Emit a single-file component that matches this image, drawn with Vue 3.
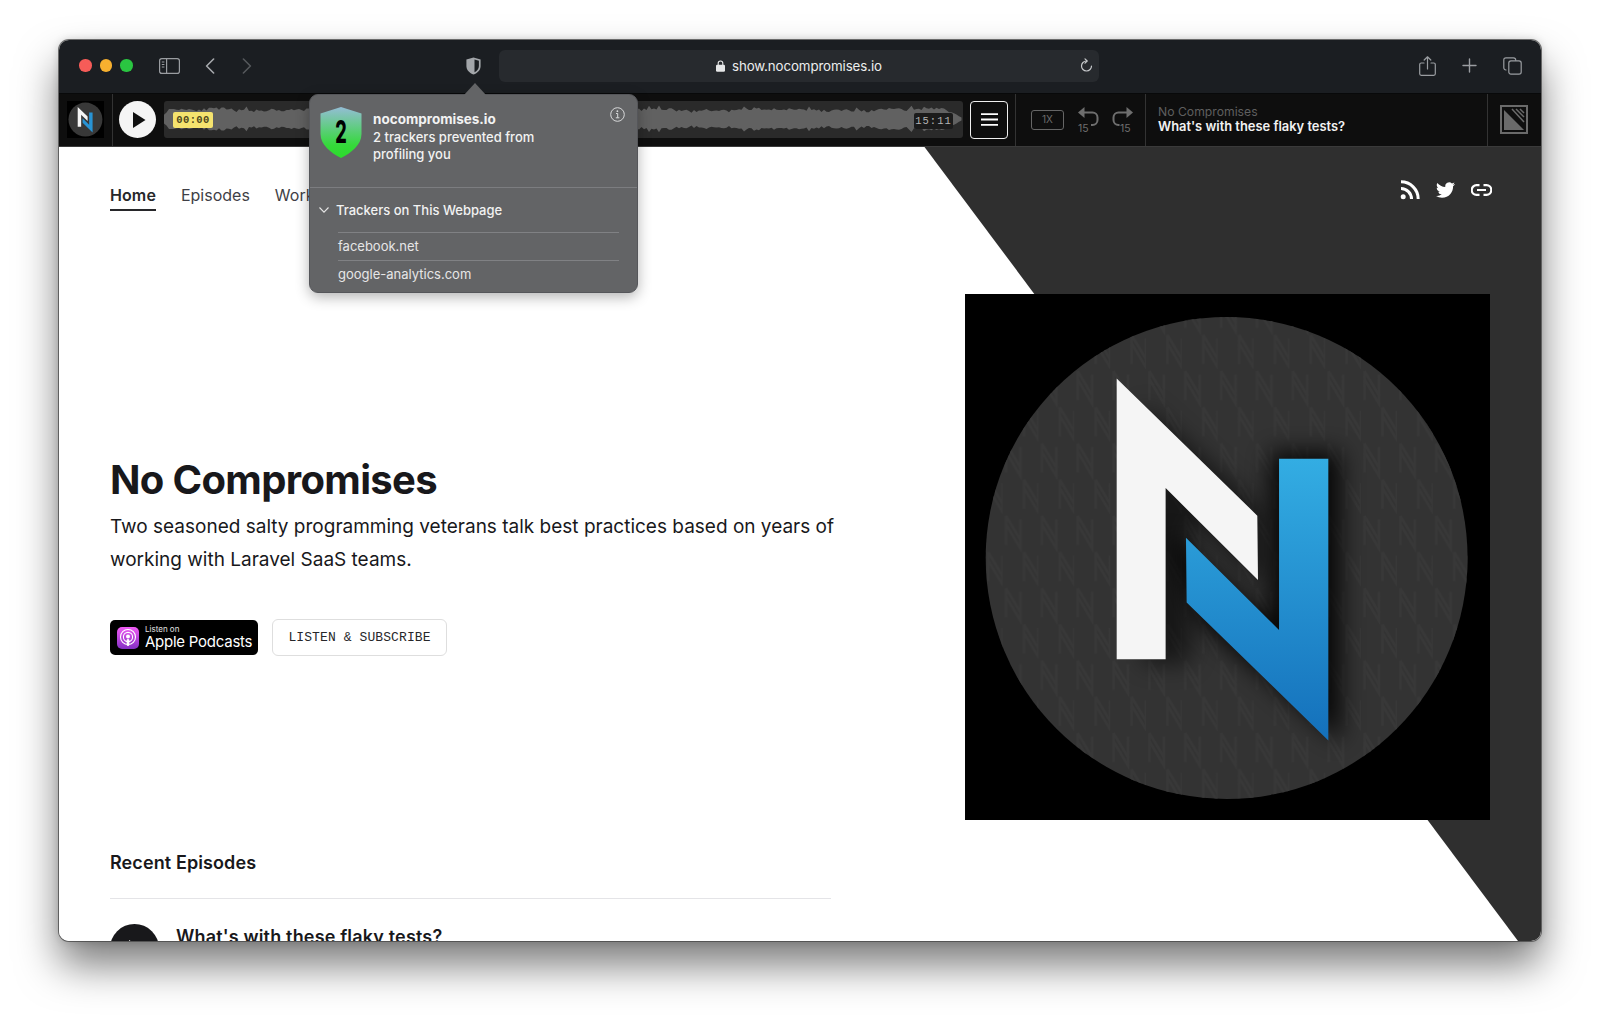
<script setup>
function wavePath(width, mid) {
  const top = []
  const bottom = []
  let seed = 11
  const rnd = () => {
    seed = (seed * 16807) % 2147483647
    return seed / 2147483647
  }
  for (let x = 0; x <= width; x += 2.5) {
    const slow = 0.5 + 0.3 * Math.sin(x / 23) + 0.2 * Math.sin(x / 7.1)
    let amp = 7.5 + 3 * slow + (rnd() - 0.5) * 3
    if (rnd() > 0.93) amp += 3
    amp = Math.max(5.5, Math.min(14, amp))
    const fade = Math.min(1, (x + 8) / 14, (width - x + 2) / 18)
    top.push(`${x},${(mid - amp * fade).toFixed(1)}`)
    bottom.unshift(`${x},${(mid + (amp * 0.95 + 0.5) * fade).toFixed(1)}`)
  }
  return 'M' + top.concat(bottom).join('L') + 'Z'
}
const wave = wavePath(799, 18)

const trackers = ['facebook.net', 'google-analytics.com']
const nav = [
  { label: 'Home', active: true },
  { label: 'Episodes', active: false },
  { label: 'Work with us', active: false }
]
</script>

<template>
  <div class="page">
    <div class="window">
      <header class="titlebar">
        <span class="light red"></span>
        <span class="light yellow"></span>
        <span class="light green"></span>
        <svg class="ic sidebar" width="21" height="16" viewBox="0 0 21 16" fill="none" stroke="#9a9da1" stroke-width="1.2">
          <rect x=".6" y=".6" width="19.8" height="14.8" rx="2.2" />
          <path d="M7.6 .6v14.8" />
          <path d="M2.8 4h2.6M2.8 6.5h2.6M2.8 9h2.6" stroke-width="1" />
        </svg>
        <svg class="ic back" width="10" height="16" viewBox="0 0 10 16" fill="none" stroke="#a6a9ad" stroke-width="1.6" stroke-linecap="round" stroke-linejoin="round">
          <path d="M8.6 1 1.6 8l7 7" />
        </svg>
        <svg class="ic forward" width="10" height="16" viewBox="0 0 10 16" fill="none" stroke="#55585c" stroke-width="1.6" stroke-linecap="round" stroke-linejoin="round">
          <path d="M1.4 1l7 7-7 7" />
        </svg>
        <svg class="ic shield" width="15" height="18" viewBox="0 0 15 18">
          <path d="M7.5 .4 14.6 2.6V9c0 4.2-3.2 7-7.1 8.600C3.600 16 .4 13.200 .4 9V2.600Z" fill="#a3a6aa" />
          <path d="M8.500 2.500 12.900 3.800V9c0 3-2 5-4.400 6.300Z" fill="#1b1e22" />
        </svg>
        <div class="urlbar">
          <svg class="lock" width="9" height="12" viewBox="0 0 9 12">
            <path d="M2.200 5V3.300a2.300 2.300 0 0 1 4.600 0V5" fill="none" stroke="#e6e7e8" stroke-width="1.100" />
            <rect y="4.800" width="9" height="7" rx="1.300" fill="#e6e7e8" />
          </svg>
          <span class="url">show.nocompromises.io</span>
          <svg class="reload" width="13" height="15" viewBox="0 0 13 15" fill="none" stroke="#c8cacc" stroke-width="1.200" stroke-linecap="round" stroke-linejoin="round">
            <path d="M6.500 3a5 5 0 1 0 5 5" />
            <path d="M5 .8 7.200 3 5 5.200" />
          </svg>
        </div>
        <svg class="ic share" width="17" height="20" viewBox="0 0 17 20" fill="none" stroke="#9a9da1" stroke-width="1.200" stroke-linecap="round" stroke-linejoin="round">
          <path d="M5 7H2.200a1.500 1.500 0 0 0-1.500 1.500v9.300a1.500 1.500 0 0 0 1.500 1.500h12.600a1.500 1.500 0 0 0 1.500-1.500V8.500A1.500 1.500 0 0 0 14.800 7H12" />
          <path d="M8.500 13V1M5.200 4 8.500 .8 11.800 4" />
        </svg>
        <svg class="ic plus" width="15" height="15" viewBox="0 0 15 15" stroke="#9a9da1" stroke-width="1.400" stroke-linecap="round">
          <path d="M7.500 1v13M1 7.500h13" />
        </svg>
        <svg class="ic tabs" width="19" height="18" viewBox="0 0 19 18" fill="none" stroke="#9a9da1" stroke-width="1.200">
          <path d="M3.500 13H3a2.200 2.200 0 0 1-2.200-2.200V3A2.200 2.200 0 0 1 3 .8h7.500A2.200 2.200 0 0 1 12.700 3v.8" />
          <rect x="5.800" y="3.800" width="12.400" height="13.400" rx="2.200" />
        </svg>
      </header>

      <div class="player">
        <svg class="mini-logo" width="37" height="37" viewBox="15 12 1523 1526">
          <rect x="15" y="12" width="1523" height="1526" fill="#000" />
          <circle cx="774" cy="778" r="700" fill="#383838" />
          <path d="M455 257 863 655 865 842 597 575V1072H455Z" fill="#f5f5f5" />
          <path d="M926 490H1069V1307L658 907 656 719 926 987Z" fill="#2893d4" />
        </svg>
        <span class="vsep first"></span>
        <span class="play">
          <svg width="14" height="16" viewBox="0 0 14 16"><path d="M1 0 13.500 8 1 16Z" fill="#111" /></svg>
        </span>
        <div class="wavebox">
          <svg class="wave" width="799" height="37" viewBox="0 0 799 37"><path :d="wave" fill="#616161" /></svg>
          <span class="time-start">00:00</span>
          <span class="time-end">15:11</span>
        </div>
        <button class="menu">
          <svg width="17" height="13" viewBox="0 0 17 13" stroke="#fff" stroke-width="1.800"><path d="M0 1.200h17M0 6.500h17M0 11.800h17" /></svg>
        </button>
        <span class="vsep second"></span>
        <span class="speed">1X</span>
        <svg class="skip skip-back" width="22" height="26" viewBox="0 0 22 26" fill="none" stroke="#6e6e6e" stroke-width="2">
          <path d="M0 5.500 6.500 0V11Z" fill="#6e6e6e" stroke="none" />
          <path d="M5 5.500h9.500A5 5 0 0 1 19.500 10.500v2.500a5 5 0 0 1-5 5H13" />
          <text x="0" y="24.500" class="skip-num">15</text>
        </svg>
        <svg class="skip skip-fwd" width="22" height="26" viewBox="0 0 22 26" fill="none" stroke="#6e6e6e" stroke-width="2">
          <path d="M21 5.500 14.500 0V11Z" fill="#6e6e6e" stroke="none" />
          <path d="M16 5.500H6.500A5 5 0 0 0 1.500 10.500v2.500a5 5 0 0 0 5 5h1" />
          <text x="8" y="24.500" class="skip-num">15</text>
        </svg>
        <span class="vsep third"></span>
        <div class="now">
          <span class="now-show">No Compromises</span>
          <span class="now-title">What's with these flaky tests?</span>
        </div>
        <span class="vsep last"></span>
        <svg class="cover-ic" width="28" height="29" viewBox="0 0 28 29">
          <rect x="1" y="1" width="26" height="27" fill="none" stroke="#6a6a6a" stroke-width="2" />
          <path d="M4 5 24 25H4Z" fill="#6a6a6a" />
          <path d="M12 4 24 17M16 4 24 12M20 4 24 8" stroke="#6a6a6a" stroke-width="1.500" />
        </svg>
      </div>

      <main class="content">
        <div class="slant"></div>
        <div class="topline">
          <nav class="nav">
            <a v-for="item in nav" :key="item.label" class="nav-link" :class="{ active: item.active }">{{ item.label }}</a>
          </nav>
          <div class="social">
            <svg width="20" height="20" viewBox="0 0 20 20" fill="none" stroke="#fff" stroke-width="3">
              <path d="M1 8.500A10.500 10.500 0 0 1 11.500 19" />
              <path d="M1 1.800A17.200 17.200 0 0 1 18.200 19" />
              <circle cx="3.200" cy="16.800" r="2.500" fill="#fff" stroke="none" />
            </svg>
            <svg width="19" height="16" viewBox="0 0 24 20">
              <path fill="#fff" d="M23.950 2.570a10 10 0 0 1-2.820.77 4.960 4.960 0 0 0 2.160-2.720c-.95.55-2 .96-3.130 1.190a4.920 4.920 0 0 0-8.380 4.480C7.690 6.100 4.070 4.130 1.640 1.160a4.820 4.820 0 0 0-.67 2.480c0 1.710.87 3.210 2.190 4.100a4.900 4.900 0 0 1-2.230-.62v.06a4.920 4.920 0 0 0 3.950 4.830 5 5 0 0 1-2.210.08 4.940 4.940 0 0 0 4.600 3.420A9.870 9.870 0 0 1 0 17.540 14 14 0 0 0 7.550 19.750c9.050 0 14-7.500 14-13.980 0-.21 0-.42-.02-.63a9.940 9.940 0 0 0 2.460-2.550Z" />
            </svg>
            <svg width="21" height="12" viewBox="0 0 21 12" fill="none" stroke="#fff" stroke-width="2.200">
              <path d="M8.500 1.200H5.500a4.800 4.800 0 0 0 0 9.600h3M12.500 1.200h3a4.800 4.800 0 0 1 0 9.600h-3M6 6h9" />
            </svg>
          </div>
        </div>

        <section class="hero">
          <div class="intro">
            <h1>No Compromises</h1>
            <p>Two seasoned salty programming veterans talk best practices based on years of working with Laravel SaaS teams.</p>
            <div class="actions">
              <a class="apple">
                <svg width="22" height="22" viewBox="0 0 22 22">
                  <defs>
                    <linearGradient id="podcast" x1="0" y1="0" x2="0" y2="1">
                      <stop offset="0" stop-color="#f15bf5" />
                      <stop offset="1" stop-color="#8430c4" />
                    </linearGradient>
                  </defs>
                  <rect width="22" height="22" rx="5" fill="url(#podcast)" />
                  <circle cx="11" cy="10" r="7.500" fill="none" stroke="#fff" stroke-width="1.100" />
                  <circle cx="11" cy="10" r="4.600" fill="none" stroke="#fff" stroke-width="1.100" />
                  <circle cx="11" cy="9.500" r="2" fill="#fff" />
                  <rect x="9.700" y="12" width="2.600" height="7" rx="1.300" fill="#fff" />
                </svg>
                <span class="apple-text">
                  <small>Listen on</small>
                  <strong>Apple Podcasts</strong>
                </span>
              </a>
              <a class="subscribe">LISTEN &amp; SUBSCRIBE</a>
            </div>
          </div>
          <svg class="artwork" width="525" height="526" viewBox="15 12 1523 1526">
            <defs>
              <linearGradient id="blue" x1="0" y1="0" x2="0" y2="1">
                <stop offset="0" stop-color="#33ade3" />
                <stop offset="1" stop-color="#1470bb" />
              </linearGradient>
              <filter id="soft" x="-30%" y="-30%" width="160%" height="160%">
                <feGaussianBlur stdDeviation="34" />
              </filter>
              <pattern id="marks" width="104" height="210" patternUnits="userSpaceOnUse" x="20" y="20">
                <g fill="none" stroke="#383838" stroke-width="7">
                  <path d="M10 6v84M10 6 52 76M52 16v84L10 30" />
                  <path d="M62 111v84M62 111l42 70M104 121v84L62 135" />
                </g>
              </pattern>
              <clipPath id="disc"><circle cx="774" cy="778" r="699" /></clipPath>
            </defs>
            <rect x="15" y="12" width="1523" height="1526" fill="#000" />
            <circle cx="774" cy="778" r="699" fill="#333" />
            <circle cx="774" cy="778" r="699" fill="url(#marks)" />
            <g clip-path="url(#disc)">
              <path d="M530 330 880 640V860L670 660V1085H530Z" fill="#000" opacity=".55" filter="url(#soft)" />
              <path d="M900 470H1105V1310L690 960 600 700 900 960Z" fill="#000" opacity=".85" filter="url(#soft)" />
            </g>
            <path d="M455 257 863 655 865 842 597 575V1072H455Z" fill="#f5f5f5" />
            <path d="M926 490H1069V1307L658 907 656 719 926 987Z" fill="url(#blue)" />
          </svg>
        </section>

        <section class="recent">
          <h2>Recent Episodes</h2>
          <div class="episode">
            <span class="ep-play">
              <svg width="16" height="18" viewBox="0 0 16 18"><path d="M1 0 15 9 1 18Z" fill="#fff" /></svg>
            </span>
            <h3>What's with these flaky tests?</h3>
          </div>
        </section>
      </main>

      <aside class="popover">
        <span class="arrow"></span>
        <div class="pop-head">
          <svg class="badge" width="42" height="51" viewBox="0 0 42 51">
            <defs>
              <linearGradient id="guard" x1="0" y1="0" x2="0" y2="1">
                <stop offset="0" stop-color="#94bdd6" />
                <stop offset=".75" stop-color="#35d93a" />
                <stop offset="1" stop-color="#2bdc2b" />
              </linearGradient>
            </defs>
            <path d="M21 0 41.500 6.500V27C41.500 38 31 46 21 51 11 46 .5 38 .5 27V6.500Z" fill="url(#guard)" />
            <text class="badge-num" text-anchor="middle" transform="translate(21 36) scale(.58 1)">2</text>
          </svg>
          <div class="pop-text">
            <strong>nocompromises.io</strong>
            <span>2 trackers prevented from profiling you</span>
          </div>
          <svg class="info" width="15" height="15" viewBox="0 0 15 15" fill="none" stroke="#d8d9da" stroke-width="1">
            <circle cx="7.500" cy="7.500" r="6.800" />
            <path d="M6 6.500h1.700v4.300M5.800 10.800h3.600" />
            <circle cx="7.400" cy="4.200" r=".9" fill="#d8d9da" stroke="none" />
          </svg>
        </div>
        <div class="pop-list">
          <div class="pop-listhead">
            <svg width="10" height="6" viewBox="0 0 10 6" fill="none" stroke="#e6e6e6" stroke-width="1.100"><path d="M.5 .5 5 5.200 9.500 .5" /></svg>
            <span>Trackers on This Webpage</span>
          </div>
          <div v-for="t in trackers" :key="t" class="pop-item">{{ t }}</div>
        </div>
      </aside>
    </div>
  </div>
</template>

<style scoped>
.page {
  width: 1600px;
  height: 1018px;
  box-sizing: border-box;
  padding: 40px 59px 77px 59px;
  background: #fff;
  overflow: hidden;
  font-family: Inter, "Liberation Sans", sans-serif;
}
.window {
  position: relative;
  height: 901px;
  border-radius: 10px;
  display: flex;
  flex-direction: column;
  background: #fff;
  box-shadow: 0 0 0 1px rgba(70, 70, 70, .75), 0 0 8px rgba(0, 0, 0, .18), 0 24px 42px rgba(0, 0, 0, .52);
}
.titlebar {
  height: 54px;
  flex: none;
  display: flex;
  align-items: center;
  background: #1b1e22;
  border-radius: 10px 10px 0 0;
  box-sizing: border-box;
  padding: 0 0 2px 20px;
  border-bottom: 1px solid #08090a;
}
.light {
  width: 12.500px;
  height: 12.500px;
  border-radius: 50%;
  margin-right: 8px;
  flex: none;
}
.red { background: #f65c58; }
.yellow { background: #f7b02f; }
.green { background: #2ac541; }
.ic { flex: none; }
.sidebar { margin-left: 18.500px; }
.back { margin-left: 25px; }
.forward { margin-left: 27px; }
.shield { margin-left: 214px; }
.urlbar {
  width: 600px;
  height: 32px;
  margin-left: 18px;
  border-radius: 6px;
  background: #272a2e;
  display: flex;
  align-items: center;
  box-sizing: border-box;
  padding-left: 217px;
  color: #eceded;
  font-size: 13.300px;
}
.lock { margin-right: 7px; }
.url { letter-spacing: -.1px; }
.reload { margin-left: 198px; }
.share { margin-left: 320px; }
.plus { margin-left: 26px; }
.tabs { margin-left: 26px; }

.player {
  height: 53px;
  flex: none;
  display: flex;
  align-items: center;
  background: #0e0e0e;
  border-bottom: 1px solid #3a3a3a;
  box-sizing: border-box;
  padding-bottom: 1px;
}
.mini-logo { margin-left: 8px; flex: none; }
.vsep {
  width: 1px;
  align-self: stretch;
  background: #333;
  flex: none;
  margin-bottom: -1px;
}
.first { margin-left: 8px; }
.play {
  width: 37px;
  height: 37px;
  margin-left: 6px;
  border-radius: 50%;
  background: #f5f5f5;
  display: flex;
  align-items: center;
  justify-content: center;
  padding-left: 3px;
  box-sizing: border-box;
  flex: none;
}
.wavebox {
  position: relative;
  width: 799px;
  height: 37px;
  margin-left: 8px;
  background: #2a2a2a;
  border-radius: 3px;
  flex: none;
}
.wave { display: block; }
.time-start,
.time-end {
  position: absolute;
  font-family: "Liberation Mono", monospace;
  font-size: 10.500px;
  line-height: 16px;
  border-radius: 2px;
  text-align: center;
}
.time-start {
  left: 9px;
  top: 11px;
  width: 40px;
  background: #f5e36e;
  color: #4e4820;
  font-weight: 700;
  letter-spacing: .4px;
}
.time-end {
  left: 750px;
  top: 12px;
  width: 39px;
  background: #1b1b1b;
  color: #b4b4b4;
  letter-spacing: 1px;
}
.menu {
  width: 38px;
  height: 38px;
  margin-left: 7px;
  padding: 0;
  background: transparent;
  border: 1.500px solid #f0f0f0;
  border-radius: 4px;
  display: flex;
  align-items: center;
  justify-content: center;
  flex: none;
}
.second { margin-left: 7px; }
.speed {
  width: 33px;
  height: 20px;
  margin-left: 15px;
  border: 1.500px solid #666;
  border-radius: 3px;
  box-sizing: border-box;
  color: #6c6c6c;
  font-size: 10px;
  line-height: 17px;
  text-align: center;
  flex: none;
}
.skip { flex: none; overflow: visible; }
.skip-back { margin-left: 14px; }
.skip-fwd { margin-left: 12px; }
.skip-num {
  font-family: Inter, sans-serif;
  font-size: 10.500px;
  fill: #6e6e6e;
  stroke: none;
}
.third { margin-left: 11px; }
.now {
  width: 329px;
  margin-left: 12px;
  display: flex;
  flex-direction: column;
  line-height: 14.500px;
  flex: none;
}
.now-show { color: #5f5f5f; font-size: 12.200px; }
.now-title { color: #f2f2f2; font-weight: 600; font-size: 12.900px; }
.cover-ic { margin-left: 12px; flex: none; }

.content {
  position: relative;
  flex: 1;
  min-height: 0;
  overflow: hidden;
  border-radius: 0 0 10px 10px;
  background: #fff;
  box-sizing: border-box;
  padding: 0 51px 0 51px;
}
.slant {
  position: absolute;
  inset: 0;
  background: #2f2f2f;
  clip-path: polygon(865.500px 0, 100% 0, 100% 100%, 1459px 100%);
}
.topline {
  position: relative;
  height: 147px;
  display: flex;
  justify-content: space-between;
  align-items: flex-start;
}
.nav {
  display: flex;
  gap: 25px;
  padding-top: 37px;
  font-size: 16px;
  line-height: 22px;
}
.nav-link {
  color: #3f3f46;
  padding-bottom: 3px;
}
.nav-link.active {
  color: #27272a;
  font-weight: 600;
  border-bottom: 2px solid #27272a;
  letter-spacing: .1px;
}
.social {
  display: flex;
  align-items: center;
  gap: 16px;
  padding-top: 33px;
  margin-right: -2px;
}
.hero {
  position: relative;
  display: flex;
  justify-content: space-between;
  align-items: center;
}
.intro {
  width: 735px;
  margin-top: -2px;
}
h1 {
  margin: 0;
  font-size: 40px;
  line-height: 48px;
  font-weight: 700;
  letter-spacing: -.65px;
  color: #18181b;
}
p {
  margin: 6px 0 0;
  font-size: 19px;
  line-height: 33px;
  color: #18181b;
}
.actions {
  display: flex;
  align-items: center;
  gap: 14px;
  margin-top: 43px;
}
.apple {
  width: 148px;
  height: 35px;
  box-sizing: border-box;
  padding-left: 7px;
  background: #000;
  border-radius: 5px;
  display: flex;
  align-items: center;
  gap: 6px;
  color: #fff;
}
.apple-text {
  display: flex;
  flex-direction: column;
}
.apple-text small {
  font-size: 8px;
  line-height: 8px;
  color: #e4e4e4;
}
.apple-text strong {
  font-size: 15px;
  line-height: 17px;
  font-weight: 400;
  letter-spacing: -.25px;
}
.subscribe {
  width: 175px;
  height: 37px;
  box-sizing: border-box;
  border: 1px solid #dedede;
  border-radius: 6px;
  font-family: "Liberation Mono", monospace;
  font-size: 13px;
  line-height: 35px;
  letter-spacing: .1px;
  text-align: center;
  color: #27272a;
}
.artwork {
  display: block;
  flex: none;
}
.recent {
  position: relative;
  width: 721px;
  margin-top: 31px;
}
h2 {
  margin: 0;
  padding-bottom: 23px;
  font-size: 18px;
  line-height: 24px;
  font-weight: 600;
  letter-spacing: .1px;
  color: #18181b;
  border-bottom: 1px solid #e4e4e7;
}
.episode {
  display: flex;
  gap: 17px;
  margin-top: 25px;
}
.ep-play {
  width: 49px;
  height: 49px;
  border-radius: 50%;
  background: #18181b;
  display: flex;
  align-items: center;
  justify-content: center;
  padding-left: 3px;
  box-sizing: border-box;
  flex: none;
}
h3 {
  margin: 0;
  font-size: 18px;
  line-height: 26px;
  font-weight: 600;
  letter-spacing: .17px;
  color: #18181b;
}

.popover {
  position: absolute;
  left: 250px;
  top: 54px;
  width: 329px;
  height: 199px;
  box-sizing: border-box;
  background: #636466;
  border-radius: 9px;
  border: 1px solid #55565a;
  box-shadow: 0 4px 14px rgba(0, 0, 0, .3);
  color: #f2f2f2;
  font-size: 13px;
}
.arrow {
  position: absolute;
  left: 154px;
  top: -12px;
  width: 0;
  height: 0;
  border-left: 11px solid transparent;
  border-right: 11px solid transparent;
  border-bottom: 12px solid #636466;
}
.pop-head {
  position: relative;
  height: 93px;
  box-sizing: border-box;
  padding: 12px 0 0 10px;
  display: flex;
  gap: 11px;
  border-bottom: 1px solid #7c7d80;
}
.badge { flex: none; }
.badge-num {
  font-family: Inter, sans-serif;
  font-size: 31px;
  font-weight: 800;
  fill: #000;
}
.pop-text {
  width: 190px;
  display: flex;
  flex-direction: column;
  line-height: 16.500px;
  padding-top: 3px;
  font-weight: 500;
}
.pop-text strong {
  font-weight: 700;
  font-size: 13.500px;
  line-height: 19px;
}
.info {
  position: absolute;
  right: 12px;
  top: 12px;
}
.pop-list {
  padding: 0 18px 0 9px;
}
.pop-listhead {
  height: 44px;
  display: flex;
  align-items: center;
  gap: 7px;
  font-weight: 500;
}
.pop-item {
  margin-left: 19px;
  height: 27.500px;
  box-sizing: border-box;
  border-top: 1px solid #808184;
  line-height: 27px;
  color: #e6e6e6;
}
</style>

<style>
html, body { margin: 0; background: #fff; }
</style>
